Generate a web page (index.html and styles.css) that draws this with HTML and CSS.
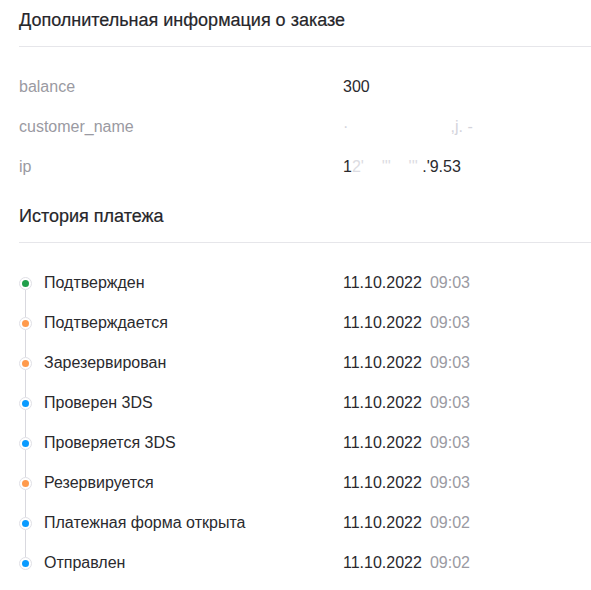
FILE: index.html
```html
<!DOCTYPE html>
<html lang="ru">
<head>
<meta charset="utf-8">
<link rel="stylesheet" href="styles.css">
</head>
<body>
<main class="page">
  <section class="section">
    <h2 class="section-title">Дополнительная информация о заказе</h2>
    <div class="info">
      <div class="info-row"><span class="info-label">balance</span><span class="info-value">300</span></div>
      <div class="info-row"><span class="info-label">customer_name</span><span class="info-value blurred">·&nbsp;&nbsp;&nbsp;&nbsp;&nbsp;&nbsp;&nbsp;&nbsp;&nbsp;&nbsp;&nbsp;&nbsp;&nbsp;&nbsp;&nbsp;&nbsp;&nbsp;&nbsp;&nbsp;&nbsp;&nbsp;&nbsp;&nbsp;,j. -</span></div>
      <div class="info-row"><span class="info-label">ip</span><span class="info-value">1<span class="blur">2'&nbsp;&nbsp;&nbsp;&nbsp;'''&nbsp;&nbsp;&nbsp;&nbsp;'''&nbsp;</span>.'9.53</span></div>
    </div>
  </section>
  <section class="section">
    <h2 class="section-title">История платежа</h2>
    <ul class="timeline">
      <li class="tl-item first"><span class="marker"><span class="seg"></span><span class="dot green"></span><span class="seg"></span></span><span class="tl-name">Подтвержден</span><span class="tl-date">11.10.2022</span><span class="tl-time">09:03</span></li>
      <li class="tl-item"><span class="marker"><span class="seg"></span><span class="dot orange"></span><span class="seg"></span></span><span class="tl-name">Подтверждается</span><span class="tl-date">11.10.2022</span><span class="tl-time">09:03</span></li>
      <li class="tl-item"><span class="marker"><span class="seg"></span><span class="dot orange"></span><span class="seg"></span></span><span class="tl-name">Зарезервирован</span><span class="tl-date">11.10.2022</span><span class="tl-time">09:03</span></li>
      <li class="tl-item"><span class="marker"><span class="seg"></span><span class="dot blue"></span><span class="seg"></span></span><span class="tl-name">Проверен 3DS</span><span class="tl-date">11.10.2022</span><span class="tl-time">09:03</span></li>
      <li class="tl-item"><span class="marker"><span class="seg"></span><span class="dot blue"></span><span class="seg"></span></span><span class="tl-name">Проверяется 3DS</span><span class="tl-date">11.10.2022</span><span class="tl-time">09:03</span></li>
      <li class="tl-item"><span class="marker"><span class="seg"></span><span class="dot orange"></span><span class="seg"></span></span><span class="tl-name">Резервируется</span><span class="tl-date">11.10.2022</span><span class="tl-time">09:03</span></li>
      <li class="tl-item"><span class="marker"><span class="seg"></span><span class="dot blue"></span><span class="seg"></span></span><span class="tl-name">Платежная форма открыта</span><span class="tl-date">11.10.2022</span><span class="tl-time">09:02</span></li>
      <li class="tl-item last"><span class="marker"><span class="seg"></span><span class="dot blue"></span><span class="seg"></span></span><span class="tl-name">Отправлен</span><span class="tl-date">11.10.2022</span><span class="tl-time">09:02</span></li>
    </ul>
  </section>
</main>
</body>
</html>
```

FILE: styles.css
```css
* { box-sizing: border-box; }
html, body { margin: 0; padding: 0; background: #fff; }
body {
  font-family: "Liberation Sans", Arial, sans-serif;
  color: #2a2a2e;
  font-size: 16px;
}
.page {
  padding: 7px 0 0 19px;
  display: flex;
  flex-direction: column;
  gap: 16px;
}
.section-title {
  margin: 0;
  font-size: 18px;
  font-weight: normal;
  line-height: 26px;
  padding-bottom: 13px;
  border-bottom: 1px solid #e6e6ea;
  color: #26262a;
  -webkit-text-stroke: 0.2px #26262a;
}
.info {
  padding-top: 20px;
  display: flex;
  flex-direction: column;
}
.info-row {
  display: grid;
  grid-template-columns: 324px 1fr;
  height: 40px;
  align-items: center;
  line-height: 20px;
}
.info-label { color: #9a9aa2; }
.info-value { color: #2a2a2e; }
.blurred { color: #d4d4dc; }
.blur { color: #dcdce2; }
.timeline {
  list-style: none;
  margin: 0;
  padding: 20px 0 0 0;
  display: flex;
  flex-direction: column;
}
.tl-item {
  display: flex;
  align-items: center;
  height: 40px;
  line-height: 20px;
}
.marker {
  width: 13px;
  height: 40px;
  display: flex;
  flex-direction: column;
  align-items: center;
  margin-right: 12px;
}
.seg {
  flex: 1;
  width: 1px;
  background: #d9d9df;
}
.first .seg:first-child, .last .seg:last-child { background: transparent; }
.dot {
  width: 13px;
  height: 13px;
  border-radius: 50%;
  border: 1px solid #e0e0e6;
  display: flex;
  align-items: center;
  justify-content: center;
  flex: none;
}
.dot::after {
  content: "";
  width: 7px;
  height: 7px;
  border-radius: 50%;
  background: currentColor;
}
.green { color: #1f9f4a; }
.orange { color: #ff9a4c; }
.blue { color: #0a9bff; }
.tl-name { width: 299px; }
.tl-date { margin-right: 8px; }
.tl-time { color: #9a9aa2; }
```
